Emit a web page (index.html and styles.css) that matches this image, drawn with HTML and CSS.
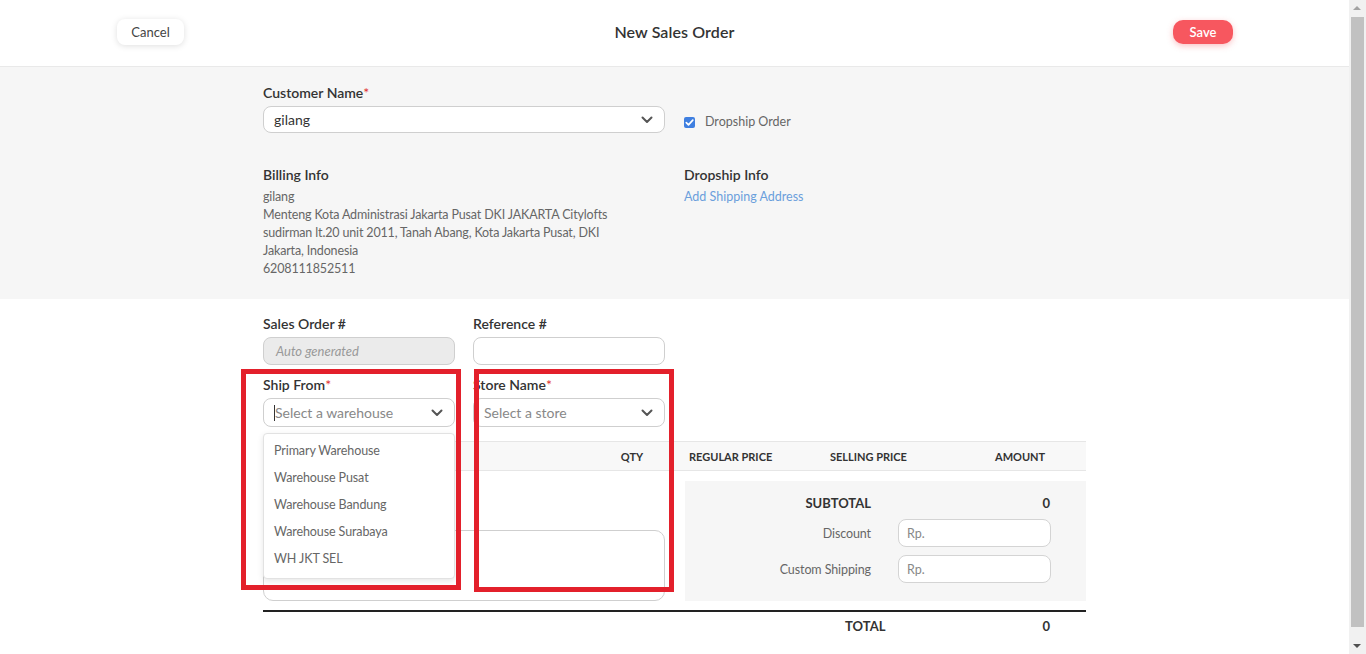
FILE: index.html
```html
<!DOCTYPE html>
<html lang="en">
<head>
<meta charset="utf-8">
<title>New Sales Order</title>
<link rel="stylesheet" href="styles.css">
</head>
<body>
<div class="page">
  <header class="topbar">
    <button class="btn btn-cancel" type="button">Cancel</button>
    <h1 class="title">New Sales Order</h1>
    <button class="btn btn-save" type="button">Save</button>
  </header>

  <section class="customer">
    <div class="container">
      <div class="customer-row">
        <div class="field field-wide">
          <div class="label">Customer Name<span class="req">*</span></div>
          <div class="select select-wide">
            <span class="value">gilang</span>
            <svg class="chev" width="12" height="8" viewBox="0 0 12 8"><path d="M1.5 1.5 L6 6 L10.5 1.5" fill="none" stroke="#555" stroke-width="2" stroke-linecap="round" stroke-linejoin="round"/></svg>
          </div>
        </div>
        <label class="dropship">
          <span class="checkbox"><svg width="11" height="11" viewBox="0 0 11 11"><path d="M2.3 5.6 L4.5 7.8 L8.8 3.2" fill="none" stroke="#fff" stroke-width="1.7" stroke-linecap="round" stroke-linejoin="round"/></svg></span>
          Dropship Order
        </label>
      </div>
      <div class="info-row">
        <div class="billing">
          <div class="info-title">Billing Info</div>
          <div class="info-text">gilang</div>
          <div class="info-text">Menteng Kota Administrasi Jakarta Pusat DKI JAKARTA Citylofts<br>sudirman lt.20 unit 2011, Tanah Abang, Kota Jakarta Pusat, DKI<br>Jakarta, Indonesia</div>
          <div class="info-text">6208111852511</div>
        </div>
        <div class="dropship-info">
          <div class="info-title">Dropship Info</div>
          <a class="link" href="#">Add Shipping Address</a>
        </div>
      </div>
    </div>
  </section>

  <section class="order">
    <div class="container order-inner">
      <div class="fields">
        <div class="field">
          <div class="label">Sales Order #</div>
          <div class="input input-disabled"><span class="placeholder-italic">Auto generated</span></div>
        </div>
        <div class="field">
          <div class="label">Reference #</div>
          <div class="input"></div>
        </div>
        <div class="field field-menu">
          <div class="label">Ship From<span class="req">*</span></div>
          <div class="select">
            <span class="placeholder"><span class="caret"></span>Select a warehouse</span>
            <svg class="chev" width="12" height="8" viewBox="0 0 12 8"><path d="M1.5 1.5 L6 6 L10.5 1.5" fill="none" stroke="#555" stroke-width="2" stroke-linecap="round" stroke-linejoin="round"/></svg>
          </div>
          <ul class="menu">
            <li>Primary Warehouse</li>
            <li>Warehouse Pusat</li>
            <li>Warehouse Bandung</li>
            <li>Warehouse Surabaya</li>
            <li>WH JKT SEL</li>
          </ul>
        </div>
        <div class="field">
          <div class="label">Store Name<span class="req">*</span></div>
          <div class="select">
            <span class="placeholder">Select a store</span>
            <svg class="chev" width="12" height="8" viewBox="0 0 12 8"><path d="M1.5 1.5 L6 6 L10.5 1.5" fill="none" stroke="#555" stroke-width="2" stroke-linecap="round" stroke-linejoin="round"/></svg>
          </div>
        </div>
      </div>

      <div class="table-head">
        <div class="th th-item"></div>
        <div class="th th-qty">QTY</div>
        <div class="th th-price">REGULAR PRICE</div>
        <div class="th th-price">SELLING PRICE</div>
        <div class="th th-amount">AMOUNT</div>
      </div>

      <div class="order-body">
        <div class="left-col">
          <div class="notes"></div>
        </div>
        <div class="summary">
          <div class="sum-row sum-row-first">
            <div class="sum-label strong">SUBTOTAL</div>
            <div class="sum-value">0</div>
          </div>
          <div class="sum-row">
            <div class="sum-label">Discount</div>
            <div class="sum-input">Rp.</div>
          </div>
          <div class="sum-row">
            <div class="sum-label">Custom Shipping</div>
            <div class="sum-input">Rp.</div>
          </div>
        </div>
      </div>

      <div class="total-row">
        <div class="total-label">TOTAL</div>
        <div class="total-value">0</div>
      </div>

      <div class="mark mark-ship"></div>
      <div class="mark mark-store"></div>
    </div>
  </section>
</div>

<div class="scrollbar" aria-hidden="true">
  <div class="sb-btn sb-up"></div>
  <div class="sb-track"><div class="sb-thumb"></div></div>
  <div class="sb-btn sb-down"></div>
</div>
</body>
</html>
```

FILE: styles.css
```css
* { box-sizing: border-box; }

html, body {
  margin: 0;
  padding: 0;
}

body {
  font-family: "Lato", "Liberation Sans", sans-serif;
  color: #333;
  background: #fff;
  height: 654px;
  overflow: hidden;
  display: flex;
}

.page {
  flex: 1;
  min-width: 0;
  height: 654px;
  overflow: hidden;
}

/* fake window scrollbar */
.scrollbar {
  width: 17px;
  flex: none;
  height: 654px;
  background: #f1f1f1;
  display: flex;
  flex-direction: column;
}

.sb-btn {
  height: 17px;
  flex: none;
  position: relative;
}

.sb-up::after,
.sb-down::after {
  content: "";
  position: absolute;
  left: 4px;
  width: 0;
  height: 0;
  border-left: 4px solid transparent;
  border-right: 4px solid transparent;
}

.sb-up::after {
  top: 6px;
  border-bottom: 4px solid #a3a3a3;
}

.sb-down::after {
  top: 7px;
  border-top: 4px solid #505050;
}

.sb-track {
  flex: 1;
  padding: 0 2px 10px;
}

.sb-thumb {
  height: 100%;
  background: #c1c1c1;
}

/* header */
.topbar {
  height: 67px;
  border-bottom: 1px solid #e9e9e9;
  display: flex;
  align-items: center;
  justify-content: space-between;
  padding: 0 116px 0 117px;
  position: relative;
}

.btn {
  font-family: inherit;
  border: 0;
  cursor: pointer;
  font-size: 13px;
}

.btn-cancel {
  width: 67px;
  height: 26px;
  background: #fff;
  color: #444;
  border-radius: 8px;
  box-shadow: 0 1px 6px rgba(0, 0, 0, 0.13);
  margin-top: -2px;
}

.btn-save {
  width: 60px;
  height: 24px;
  background: #f7575f;
  color: #fff;
  border-radius: 10px;
  font-weight: 600;
  box-shadow: 0 2px 6px rgba(240, 80, 90, 0.35);
  margin-top: -2px;
}

.title {
  position: absolute;
  left: 0;
  right: 0;
  top: 0;
  margin: 0;
  line-height: 64px;
  text-align: center;
  font-size: 16px;
  font-weight: 600;
  letter-spacing: 0.1px;
  color: #333;
  pointer-events: none;
}

.container {
  width: 823px;
  margin: 0 auto;
}

/* customer section */
.customer {
  background: #f6f6f6;
  padding: 17px 0 21px;
}

.customer-row {
  display: flex;
  align-items: flex-end;
}

.label {
  font-size: 14px;
  line-height: 18px;
  font-weight: 600;
  color: #333;
  margin-bottom: 4px;
}

.req { color: #e0302f; font-weight: 400; }

.select {
  height: 29px;
  border: 1px solid #cfcfcf;
  border-radius: 8px;
  background: #fff;
  display: flex;
  align-items: center;
  justify-content: space-between;
  padding: 0 11px 0 10px;
  font-size: 14px;
}

.select-wide {
  width: 402px;
  height: 27px;
}

.select .value { color: #333; }
.select .placeholder { color: #888; display: flex; align-items: center; }

.caret {
  display: inline-block;
  width: 1px;
  height: 16px;
  background: #333;
}

.chev { flex: none; }

.dropship {
  display: flex;
  align-items: center;
  gap: 10px;
  font-size: 12.5px;
  line-height: 16px;
  color: #666;
  margin-left: 19px;
  margin-bottom: 3px;
}

.checkbox {
  width: 11px;
  height: 11px;
  border-radius: 2px;
  background: #3f7fe0;
  display: flex;
}

.info-row {
  display: flex;
  margin-top: 33px;
}

.billing { width: 421px; }

.info-title {
  font-size: 14px;
  font-weight: 600;
  line-height: 18px;
  margin-bottom: 4px;
  color: #333;
}

.info-text {
  font-size: 12.5px;
  letter-spacing: -0.15px;
  line-height: 18px;
  color: #666;
}

.link {
  display: block;
  font-size: 12.5px;
  line-height: 18px;
  color: #6b9fdc;
  text-decoration: none;
}

/* order section */
.order { padding: 16px 0 0; }

.order-inner { position: relative; }

.fields {
  display: grid;
  grid-template-columns: 192px 192px;
  column-gap: 18px;
  row-gap: 11px;
}

.field { position: relative; }

.input {
  height: 28px;
  border: 1px solid #cfcfcf;
  border-radius: 8px;
  background: #fff;
  display: flex;
  align-items: center;
  padding: 0 12px;
}

.input-disabled { background: #ebebeb; }

.placeholder-italic {
  font-style: italic;
  font-size: 13px;
  color: #999;
}

.menu {
  position: absolute;
  top: calc(100% + 6px);
  left: 0;
  width: 192px;
  margin: 0;
  padding: 3px 0 6px;
  list-style: none;
  background: #fff;
  border: 1px solid #e2e2e2;
  border-radius: 4px;
  box-shadow: 0 2px 6px rgba(0, 0, 0, 0.1);
  z-index: 3;
}

.menu li {
  height: 27px;
  line-height: 27px;
  padding: 0 10px;
  font-size: 12.5px;
  letter-spacing: -0.1px;
  color: #666;
}

.table-head {
  margin-top: 14px;
  height: 30px;
  background: #f8f8f8;
  border-top: 1px solid #e6e6e6;
  border-bottom: 1px solid #e6e6e6;
  display: grid;
  grid-template-columns: 337px 60px 141px 141px 144px;
  align-items: center;
}

.th {
  font-size: 11px;
  font-weight: 700;
  color: #333;
}

.th-item { padding-left: 12px; }
.th-qty { text-align: center; padding-left: 4px; }
.th-price { padding-left: 29px; }
.th-amount { padding-left: 53px; }

.order-body {
  display: flex;
  gap: 20px;
}

.left-col {
  width: 402px;
  padding-top: 59px;
}

.notes {
  height: 71px;
  border: 1px solid #cfcfcf;
  border-radius: 10px;
}

.summary {
  width: 401px;
  margin-top: 10px;
  background: #f6f6f6;
  padding: 12px 36px 18px 0;
  display: flex;
  flex-direction: column;
  gap: 8px;
}

.sum-row-first { margin-bottom: -2px; }

.sum-row {
  display: grid;
  grid-template-columns: 186px 1fr;
  column-gap: 27px;
  align-items: center;
}

.sum-label {
  text-align: right;
  font-size: 12.5px;
  letter-spacing: -0.1px;
  color: #666;
}

.sum-label.strong {
  font-weight: 700;
  color: #333;
  font-size: 13px;
  letter-spacing: 0;
  line-height: 20px;
}

.sum-value {
  text-align: right;
  font-size: 13px;
  font-weight: 700;
  color: #333;
}

.sum-input {
  height: 28px;
  margin-right: -1px;
  border: 1px solid #d4d4d4;
  border-radius: 8px;
  background: #fff;
  display: flex;
  align-items: center;
  padding: 0 8px;
  font-size: 12.5px;
  color: #888;
}

.total-row {
  margin-top: 9px;
  border-top: 2px solid #222;
  display: flex;
  justify-content: flex-end;
  align-items: center;
  height: 30px;
  padding-right: 36px;
}

.total-label {
  font-size: 13px;
  font-weight: 700;
  color: #333;
  margin-right: 157px;
}

.total-value {
  font-size: 13px;
  font-weight: 700;
  color: #333;
}

/* annotation marks */
.mark {
  position: absolute;
  border: 5px solid #e3202b;
  z-index: 5;
  pointer-events: none;
}

.mark-ship {
  left: -22px;
  top: 54px;
  width: 220px;
  height: 221px;
}

.mark-store {
  left: 211px;
  top: 54px;
  width: 200px;
  height: 223px;
}
```
